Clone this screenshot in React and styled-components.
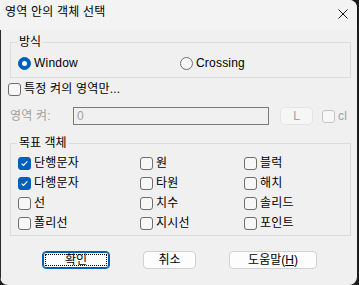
import styled, { createGlobalStyle } from 'styled-components'

const GlobalStyle = createGlobalStyle`
  html, body {
    margin: 0;
    padding: 0;
    background: #1c1c1c;
  }
  body {
    font-family: "Liberation Sans", "Noto Sans CJK KR", sans-serif;
    font-size: 12px;
    color: #000;
  }
`

const Window = styled.div`
  width: 357px;
  height: 285px;
  border-radius: 0 8px 8px 8px;
  overflow: hidden;
  display: flex;
  flex-direction: column;
  background: #f0f0f0;
`

const TitleBar = styled.div`
  height: 30px;
  flex: none;
  display: flex;
  align-items: center;
  justify-content: space-between;
  padding: 0 9px 0 5px;
  background: #f3f3f3;
`

const Title = styled.span`
  font-size: 12px;
  line-height: 14px;
  letter-spacing: 0.2px;
  margin-top: -7px;
`

const CloseIcon = styled.svg`
  width: 10px;
  height: 10px;
  margin-top: -3px;
`

const Body = styled.div`
  flex: 1;
  display: flex;
  flex-direction: column;
  align-items: flex-start;
  padding: 12px 6px 0 9px;
  border-left: 1px solid #2a2a2a;
`

const Group = styled.div`
  position: relative;
  align-self: stretch;
  border: 1px solid #dcdcdc;
  padding: ${p => p.$pad};
  margin-top: ${p => p.$top || 0}px;
`

const Legend = styled.span`
  position: absolute;
  left: 6px;
  top: -8px;
  padding: 0 2px;
  background: #f0f0f0;
  line-height: 14px;
`

const RadioRow = styled.div`
  display: grid;
  grid-template-columns: 162px auto;
`

const Option = styled.label`
  display: flex;
  align-items: center;
  gap: ${p => p.$gap ?? 3}px;
  height: 13px;
  line-height: 13px;
  white-space: nowrap;
  letter-spacing: 0.2px;
  color: ${p => (p.$disabled ? '#a0a0a0' : '#000')};
  margin-left: ${p => p.$left || 0}px;
  margin-top: ${p => p.$top || 0}px;
`

const Radio = styled.span`
  box-sizing: border-box;
  width: 13px;
  height: 13px;
  flex: none;
  border-radius: 50%;
  display: flex;
  align-items: center;
  justify-content: center;
  background: ${p => (p.$on ? '#005fb8' : '#f7f7f7')};
  border: 1px solid ${p => (p.$on ? '#005fb8' : '#6e6e6e')};
  &::after {
    content: '';
    display: ${p => (p.$on ? 'block' : 'none')};
    width: 5px;
    height: 5px;
    border-radius: 50%;
    background: #fff;
  }
`

const Box = styled.span`
  box-sizing: border-box;
  width: 13px;
  height: 13px;
  flex: none;
  border-radius: 3px;
  display: flex;
  align-items: center;
  justify-content: center;
  background: ${p => (p.$on ? '#005fb8' : '#f7f7f7')};
  border: 1px solid ${p => (p.$on ? '#005fb8' : p.$disabled ? '#c4c4c4' : '#6e6e6e')};
`

const LayerRow = styled.div`
  display: flex;
  align-items: center;
  height: 18px;
  margin-top: 11px;
`

const LayerLabel = styled.span`
  width: 63px;
  color: #a0a0a0;
  line-height: 14px;
  letter-spacing: 0.2px;
`

const Input = styled.div`
  box-sizing: border-box;
  width: 196px;
  height: 18px;
  border: 1px solid #7a7a7a;
  padding-left: 3px;
  color: #a0a0a0;
  line-height: 16px;
`

const SmallButton = styled.div`
  box-sizing: border-box;
  width: 33px;
  height: 18px;
  margin: 0 9px 0 11px;
  border: 1px solid #e4e4e4;
  border-radius: 4px;
  background: #f6f6f6;
  color: #a0a0a0;
  display: flex;
  align-items: center;
  justify-content: center;
`

const Grid = styled.div`
  display: grid;
  grid-template-columns: 122px 104px 1fr;
  row-gap: 7px;
`

const ButtonRow = styled.div`
  display: flex;
  gap: 33px;
  margin-top: 15px;
  padding-left: 32px;
`

const Button = styled.div`
  position: relative;
  box-sizing: border-box;
  width: ${p => p.$w}px;
  height: 18px;
  border-radius: 4px;
  background: #fdfdfd;
  border: 1px solid ${p => (p.$default ? '#005fb8' : '#d0d0d0')};
  box-shadow: ${p => (p.$default ? 'inset 0 0 0 1px #005fb8' : 'none')};
  display: flex;
  align-items: center;
  justify-content: center;
  line-height: 14px;
  &::after {
    content: '';
    display: ${p => (p.$default ? 'block' : 'none')};
    position: absolute;
    inset: 2px;
    border: 1px dotted #000;
  }
`

const Check = ({ on, disabled }) => (
  <Box $on={on} $disabled={disabled}>
    {on && (
      <svg width="9" height="9" viewBox="0 0 9 9">
        <path d="M1.6 4.6 L3.5 6.4 L7.4 2.4" fill="none" stroke="#fff" strokeWidth="1.2" />
      </svg>
    )}
  </Box>
)

const targets = [
  ['단행문자', true], ['원', false], ['블럭', false],
  ['다행문자', true], ['타원', false], ['해치', false],
  ['선', false], ['치수', false], ['솔리드', false],
  ['폴리선', false], ['지시선', false], ['포인트', false],
]

export default function App() {
  return (
    <>
      <GlobalStyle />
      <Window>
        <TitleBar>
          <Title>영역 안의 객체 선택</Title>
          <CloseIcon viewBox="0 0 10 10">
            <path d="M0.5 0.5 L9.5 9.5 M9.5 0.5 L0.5 9.5" stroke="#1a1a1a" strokeWidth="1" />
          </CloseIcon>
        </TitleBar>
        <Body>
          <Group $pad="14px 6px 7px 7px">
            <Legend>방식</Legend>
            <RadioRow>
              <Option><Radio $on />Window</Option>
              <Option><Radio />Crossing</Option>
            </RadioRow>
          </Group>

          <Option $left={-2} $top={5}><Check />특정 켜의 영역만...</Option>

          <LayerRow>
            <LayerLabel>영역 켜:</LayerLabel>
            <Input>0</Input>
            <SmallButton>L</SmallButton>
            <Option $disabled><Check disabled />cl</Option>
          </LayerRow>

          <Group $pad="13px 6px 5px 7px" $top={18}>
            <Legend>목표 객체</Legend>
            <Grid>
              {targets.map(([name, on]) => (
                <Option key={name}><Check on={on} />{name}</Option>
              ))}
            </Grid>
          </Group>

          <ButtonRow>
            <Button $w={68} $default>확인</Button>
            <Button $w={53}>취소</Button>
            <Button $w={88}>도움말(<u>H</u>)</Button>
          </ButtonRow>
        </Body>
      </Window>
    </>
  )
}
